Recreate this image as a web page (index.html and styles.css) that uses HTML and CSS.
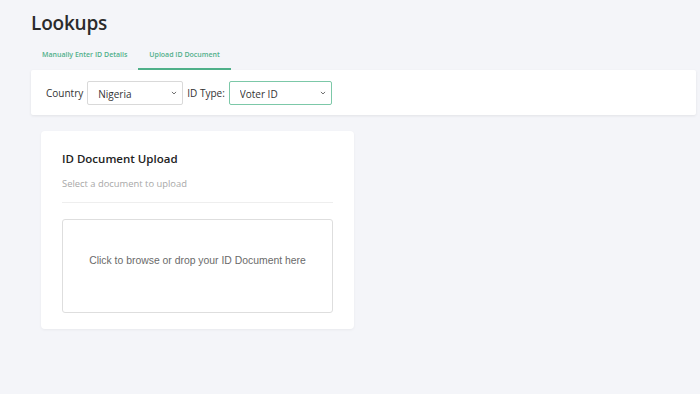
FILE: index.html
```html
<!DOCTYPE html>
<html lang="en">
<head>
  <meta charset="UTF-8">
  <meta name="viewport" content="width=device-width, initial-scale=1.0">
  <title>Lookups</title>
  <link rel="stylesheet" href="styles.css">
</head>
<body>
  <div class="page">
    <h1>Lookups</h1>

    <nav class="tabs">
      <a class="tab">Manually Enter ID Details</a>
      <a class="tab active">Upload ID Document</a>
    </nav>

    <div class="filter-bar">
      <label class="field-label" for="country">Country</label>
      <div class="select-wrap country">
        <select id="country">
          <option>Nigeria</option>
        </select>
        <svg class="chevron" viewBox="0 0 10 6"><path d="M1.5 1.2 5 4.6 8.5 1.2" fill="none" stroke="#555" stroke-width="1.4"/></svg>
      </div>
      <label class="field-label" for="id-type">ID Type:</label>
      <div class="select-wrap id-type">
        <select id="id-type" class="focused">
          <option>Voter ID</option>
        </select>
        <svg class="chevron" viewBox="0 0 10 6"><path d="M1.5 1.2 5 4.6 8.5 1.2" fill="none" stroke="#555" stroke-width="1.4"/></svg>
      </div>
    </div>

    <section class="upload-card">
      <div class="card-head">
        <h2>ID Document Upload</h2>
        <p>Select a document to upload</p>
      </div>
      <div class="dropzone">Click to browse or drop your ID Document here</div>
    </section>
  </div>
</body>
</html>
```

FILE: styles.css
```css
:root {
  --bg-color: #f4f5f9;
  --green: #3ea97e;
  --text-dark: #2b2b2b;
  --muted: #a8a8a8;
}
* { box-sizing: border-box; margin: 0; padding: 0; }
body {
  font-family: 'Open Sans', 'Noto Sans', sans-serif;
  background-color: var(--bg-color);
  color: var(--text-dark);
  height: 394px;
  overflow: hidden;
}
.page {
  padding: 10px 4px 0 31px;
}
h1 {
  font-size: 19px;
  font-weight: 600;
  line-height: 26px;
  letter-spacing: -0.2px;
}
.tabs {
  display: flex;
  margin-top: 9px;
}
.tab {
  font-size: 7px;
  font-weight: 600;
  color: var(--green);
  padding: 5px 11px 9px;
  border-bottom: 2px solid transparent;
  opacity: 0.9;
}
.tab.active { border-bottom-color: var(--green); }
.filter-bar {
  background-color: #fff;
  height: 45px;
  display: flex;
  align-items: center;
  padding-left: 15px;
  box-shadow: 0 1px 3px rgba(0, 0, 0, 0.08);
  border-radius: 2px;
}
.field-label {
  font-size: 10px;
  color: #333;
  margin-right: 4px;
}
.select-wrap {
  position: relative;
  height: 24px;
  margin-right: 4px;
}
.select-wrap.country { width: 96px; }
.select-wrap.id-type { width: 103px; }
select {
  appearance: none;
  -webkit-appearance: none;
  width: 100%;
  height: 100%;
  border: 1px solid #d9d9d9;
  border-radius: 2px;
  background-color: #fff;
  font-family: 'Open Sans', 'Noto Sans', sans-serif;
  font-size: 10px;
  color: #333;
  padding: 3px 0 0 10px;
}
select.focused { border-color: #7cc8a8; }
.chevron {
  position: absolute;
  right: 6px;
  top: 10px;
  width: 6px;
  height: 4px;
}
.upload-card {
  background-color: #fff;
  width: 313px;
  margin: 16px 0 0 10px;
  padding: 20px 21px 16px;
  border-radius: 4px;
  box-shadow: 0 1px 3px rgba(0, 0, 0, 0.05);
}
.card-head {
  border-bottom: 1px solid #eeeeee;
  padding-bottom: 13px;
  margin-bottom: 16px;
}
.card-head h2 {
  font-size: 11.5px;
  font-weight: 600;
  line-height: 15px;
  color: #222;
}
.card-head p {
  font-size: 9.4px;
  line-height: 11px;
  color: var(--muted);
  margin-top: 12px;
}
.dropzone {
  height: 94px;
  border: 1px solid #dedede;
  border-radius: 3px;
  display: flex;
  align-items: center;
  justify-content: center;
  padding-bottom: 12px;
  font-family: 'Liberation Sans', Arial, sans-serif;
  font-size: 10.4px;
  color: #6a6a6a;
}
```
